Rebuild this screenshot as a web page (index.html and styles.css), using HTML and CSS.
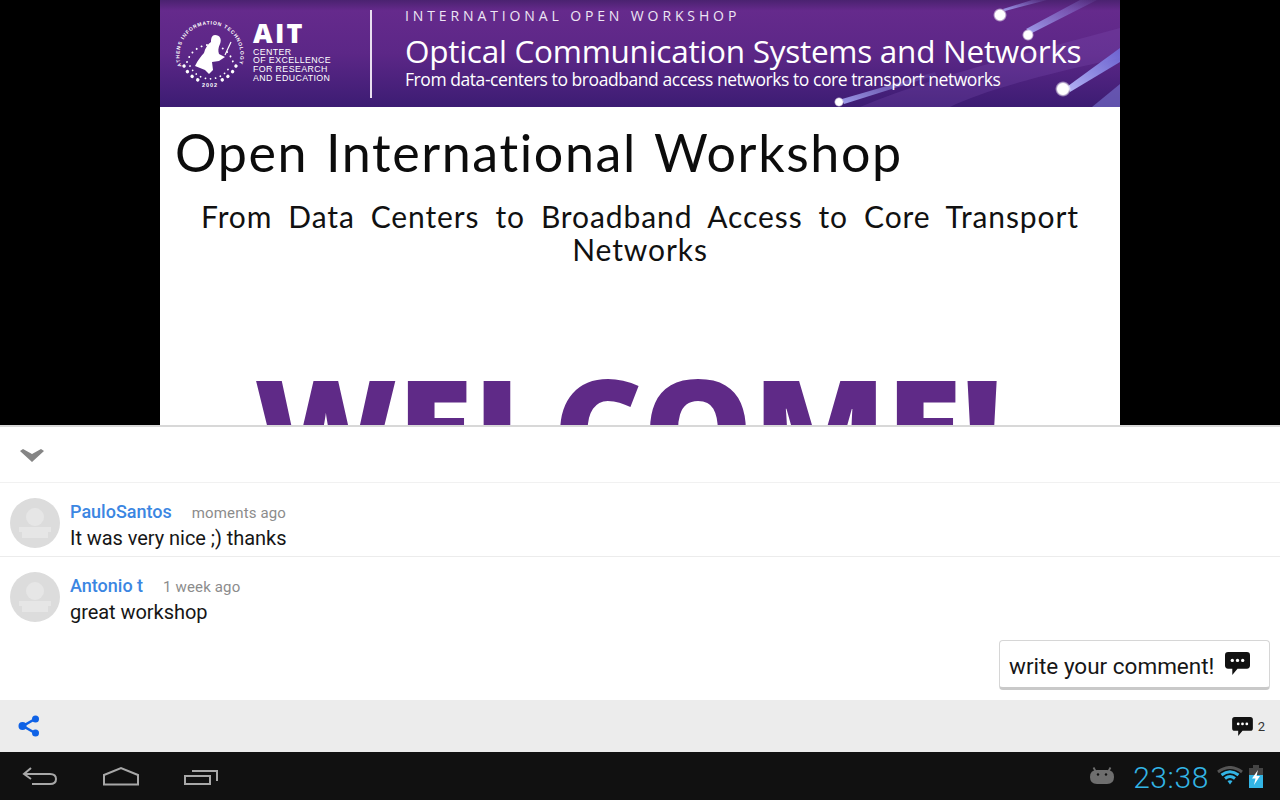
FILE: index.html
```html
<!DOCTYPE html>
<html lang="en">
<head>
<meta charset="utf-8">
<title>Workshop</title>
<link rel="stylesheet" href="styles.css">
</head>
<body>
<div class="app">
  <section class="player">
    <div class="slide">
      <header class="banner">
        <svg class="fibers" viewBox="0 0 960 107" width="960" height="107" aria-hidden="true">
          <defs>
            <linearGradient id="f1" x1="0" y1="1" x2="1" y2="0"><stop offset="0" stop-color="#a3a3f0" stop-opacity=".95"/><stop offset="1" stop-color="#8f8fe8" stop-opacity=".08"/></linearGradient>
            <linearGradient id="f3" x1="0" y1="1" x2="1" y2="0"><stop offset="0" stop-color="#b5b5f5"/><stop offset="1" stop-color="#6f6fe0" stop-opacity=".8"/></linearGradient>
            <radialGradient id="dot"><stop offset=".68" stop-color="#fff"/><stop offset="1" stop-color="#fff" stop-opacity="0"/></radialGradient>
          </defs>
          <path d="M700 107 C770 78 860 55 960 28 L960 58 C880 75 820 92 790 107Z" fill="#8a5cc0" opacity=".22"/>
          <path d="M682 99 L775 72 L776 75 L684 104Z" fill="url(#f1)"/>
          <path d="M845 11 L887 0 L872 0 L843 9Z" fill="url(#f1)"/>
          <path d="M872 33 L937 0 L920 0 L866 29Z" fill="url(#f1)"/>
          <path d="M908 86 L960 48 L960 62 L910 92Z" fill="url(#f3)"/>
          <path d="M932 107 L960 84 L960 107Z" fill="#7f7fdc" opacity=".55"/>
          <circle cx="840" cy="15" r="7" fill="url(#dot)"/>
          <circle cx="868" cy="35" r="6" fill="url(#dot)"/>
          <circle cx="903" cy="89" r="8" fill="url(#dot)"/>
          <circle cx="679" cy="102" r="5" fill="url(#dot)"/>
        </svg>
        <div class="logo">
          <svg class="seal" viewBox="0 0 70 70" width="70" height="70" aria-hidden="true">
            <defs><path id="ring" d="M7 47 A30.500 30.500 0 1 1 63 47"/></defs>
            <text class="seal-text"><textPath href="#ring" startOffset="1">ATHENS INFORMATION TECHNOLOGY</textPath></text>
            <path d="M12 42 A24 24 0 0 1 58 42" fill="none" stroke="#fff" stroke-width="1.900" stroke-dasharray=".1 5.400" stroke-linecap="round"/>
            <path d="M9 46 A28 28 0 0 0 23 60" fill="none" stroke="#fff" stroke-width="3.400" stroke-dasharray=".1 6.500" stroke-linecap="round"/>
            <path d="M61 46 A28 28 0 0 1 47 60" fill="none" stroke="#fff" stroke-width="3.400" stroke-dasharray=".1 6.500" stroke-linecap="round"/>
            <path d="M15 46 A22 22 0 0 0 55 46" fill="none" stroke="#fff" stroke-width="1.700" stroke-dasharray=".1 5" stroke-linecap="round"/>
            <path d="M40 15 C45 15 47 19 45 24 C43 28 43 31 44 34 L50 37 L44 41 L37 42 L38 50 L34 54 L30 50 L20 46 C23 40 26 36 29 33 C30 28 33 24 36 22 C36 18 37 15 40 15Z" fill="#fff"/>
            <path d="M50 35 L56 22" stroke="#fff" stroke-width="1.200"/>
            <text class="seal-year" x="35" y="66.500" text-anchor="middle">2002</text>
          </svg>
          <div class="logo-words">
            <div class="logo-ait">AIT</div>
            <div class="logo-sub">CENTER<br>OF EXCELLENCE<br>FOR RESEARCH<br>AND EDUCATION</div>
          </div>
        </div>
        <div class="banner-rule"></div>
        <div class="banner-text">
          <div class="banner-kicker">INTERNATIONAL OPEN WORKSHOP</div>
          <div class="banner-title">Optical Communication Systems and Networks</div>
          <div class="banner-sub">From data-centers to broadband access networks to core transport networks</div>
        </div>
      </header>
      <h1 class="slide-title">Open International Workshop</h1>
      <p class="slide-sub">From Data Centers to Broadband Access to Core Transport<br>Networks</p>
      <div class="slide-welcome">WELCOME!</div>
    </div>
  </section>

  <section class="panel">
    <div class="collapse-row">
      <svg class="chevron" viewBox="0 0 24 13" width="24" height="13" aria-hidden="true"><path d="M0 2 L3 0 L12 5 L21 0 L24 2 L12 13Z" fill="#858585"/></svg>
    </div>
    <article class="comment">
      <svg class="avatar" viewBox="0 0 50 50" width="50" height="50" aria-hidden="true"><circle cx="25" cy="25" r="25" fill="#dcdcdc"/><circle cx="25" cy="19" r="9" fill="#e6e6e6"/><path d="M9 29 H41 V34 H38 V40 H12 V34 H9Z" fill="#e6e6e6"/></svg>
      <div class="comment-body">
        <div class="comment-head"><span class="author">PauloSantos</span><span class="when">moments ago</span></div>
        <div class="comment-text">It was very nice ;) thanks</div>
      </div>
    </article>
    <article class="comment">
      <svg class="avatar" viewBox="0 0 50 50" width="50" height="50" aria-hidden="true"><circle cx="25" cy="25" r="25" fill="#dcdcdc"/><circle cx="25" cy="19" r="9" fill="#e6e6e6"/><path d="M9 29 H41 V34 H38 V40 H12 V34 H9Z" fill="#e6e6e6"/></svg>
      <div class="comment-body">
        <div class="comment-head"><span class="author">Antonio t</span><span class="when">1 week ago</span></div>
        <div class="comment-text">great workshop</div>
      </div>
    </article>
    <div class="compose-row">
      <button class="compose">write your comment!
        <svg viewBox="0 0 24 22" width="25" height="23" aria-hidden="true"><path d="M3 0 H21 Q24 0 24 3 V13 Q24 16 21 16 H12 L7 22 V16 H3 Q0 16 0 13 V3 Q0 0 3 0Z" fill="#111"/><circle cx="7" cy="8" r="1.600" fill="#fff"/><circle cx="12" cy="8" r="1.600" fill="#fff"/><circle cx="17" cy="8" r="1.600" fill="#fff"/></svg>
      </button>
    </div>
  </section>

  <div class="action-bar">
    <svg viewBox="0 0 22 22" width="22" height="22" aria-hidden="true"><path d="M17 4 L5 11 L17 18" fill="none" stroke="#0f62e6" stroke-width="2.600"/><circle cx="17.500" cy="4" r="3.500" fill="#0f62e6"/><circle cx="4.500" cy="11" r="4" fill="#0f62e6"/><circle cx="17.500" cy="18" r="3.500" fill="#0f62e6"/></svg>
    <div class="count">
      <svg viewBox="0 0 24 22" width="21" height="19" aria-hidden="true"><path d="M3 0 H21 Q24 0 24 3 V13 Q24 16 21 16 H12 L7 22 V16 H3 Q0 16 0 13 V3 Q0 0 3 0Z" fill="#111"/><circle cx="7" cy="8" r="1.600" fill="#fff"/><circle cx="12" cy="8" r="1.600" fill="#fff"/><circle cx="17" cy="8" r="1.600" fill="#fff"/></svg>
      <span>2</span>
    </div>
  </div>

  <nav class="sysbar">
    <div class="nav-keys">
      <svg viewBox="0 0 36 20" width="36" height="20" aria-hidden="true"><path d="M9 2 L2 8 L9 13 M2 8 H28 Q34 8 34 13 Q34 18 28 18 H10" fill="none" stroke="#a8a8a8" stroke-width="2"/></svg>
      <svg viewBox="0 0 38 20" width="38" height="20" aria-hidden="true"><path d="M2 9 L19 2 L36 9 V18.500 H2Z" fill="none" stroke="#a8a8a8" stroke-width="2"/></svg>
      <svg viewBox="0 0 36 20" width="36" height="20" aria-hidden="true"><path d="M2 10 H27 V18 H2Z M9 5 H34 V15" fill="none" stroke="#a8a8a8" stroke-width="2"/></svg>
    </div>
    <div class="status">
      <svg class="droid" viewBox="0 0 24 18" width="24" height="18" aria-hidden="true"><path d="M6 5 L3.500 0.500 M18 5 L20.500 0.500" stroke="#6e6e6e" stroke-width="1.800"/><path d="M7 3 H17 Q24 3 24 10 Q24 17 17 17 H7 Q0 17 0 10 Q0 3 7 3Z" fill="#6e6e6e"/><circle cx="8" cy="7.500" r="1.200" fill="#111"/><circle cx="16" cy="7.500" r="1.200" fill="#111"/></svg>
      <span class="clock">23:38</span>
      <svg viewBox="0 0 26 20" width="26" height="20" aria-hidden="true"><path d="M1 6 Q13 -3 25 6" fill="none" stroke="#555" stroke-width="3"/><path d="M4.500 9 Q13 2.500 21.500 9" fill="none" stroke="#33b5e5" stroke-width="3"/><path d="M8 12.500 Q13 8.500 18 12.500" fill="none" stroke="#33b5e5" stroke-width="3"/><path d="M10.500 15 L13 18.500 L15.500 15 Q13 13.500 10.500 15Z" fill="#33b5e5"/></svg>
      <svg viewBox="0 0 14 23" width="14" height="23" aria-hidden="true"><path d="M4 0 H10 V3 H14 V23 H0 V3 H4Z" fill="#444"/><path d="M0 10 H14 V23 H0Z" fill="#33b5e5"/><path d="M9 5 L3 13.500 H6.500 L5 20 L11 11 H7.500Z" fill="#fff"/></svg>
    </div>
  </nav>
</div>
</body>
</html>
```
FILE: styles.css
```css
* { box-sizing: border-box; }
html, body { margin: 0; padding: 0; }
body { width: 1280px; height: 800px; overflow: hidden; background: #fff; font-family: Roboto, sans-serif; }
.app { display: flex; flex-direction: column; width: 1280px; height: 800px; }

.player { height: 425px; background: #000; display: flex; justify-content: center; flex: none; }
.slide { width: 960px; height: 425px; background: #fff; overflow: hidden; color: #111; }

.banner { position: relative; height: 107px; display: flex; align-items: center; overflow: hidden; color: #fff;
  background: linear-gradient(180deg, #4a2270 0, #652a8c 10%, #5c2787 50%, #3c1c73 100%); }
.fibers { position: absolute; left: 0; top: 0; }
.logo { position: relative; display: flex; align-items: flex-start; margin-left: 15px; width: 178px; height: 70px; margin-top: 2px; }
.seal { flex: none; }
.seal-text { font: bold 5px "Liberation Sans", sans-serif; fill: #fff; letter-spacing: .8px; }
.seal-year { font: bold 5.500px "Liberation Sans", sans-serif; fill: #fff; letter-spacing: 1px; }
.logo-words { margin-left: 8px; margin-top: 1px; }
.logo-ait { font: 800 27px/30px "Open Sans", sans-serif; letter-spacing: 2.300px; margin-top: -3px; }
.logo-sub { font: 8.800px/8.700px "Liberation Sans", sans-serif; letter-spacing: .4px; }
.banner-rule { position: relative; width: 2px; height: 88px; background: #e9dff0; margin-left: 17px; }
.banner-text { position: relative; margin-left: 33px; margin-top: -13px; }
.banner-kicker { font: 14px/18px "Open Sans", sans-serif; letter-spacing: 3.880px; color: #eee6f4; }
.banner-title { font: 31.500px/38px "Open Sans", sans-serif; letter-spacing: -.27px; margin-top: 7px; white-space: nowrap; }
.banner-sub { font: 17.500px/18px "Open Sans", sans-serif; letter-spacing: -.44px; white-space: nowrap; }

.slide-title { margin: 15px 0 0 15px; font: 400 52px/60px Lato, sans-serif; letter-spacing: 1.600px; word-spacing: 3px; white-space: nowrap; color: #0c0c0c; }
.slide-sub { margin: 18px 0 0; text-align: center; font: 400 30px/33px Lato, sans-serif; letter-spacing: .9px; word-spacing: 7.400px; color: #111; }
.slide-welcome { margin-top: 85px; padding-right: 24px; text-align: center; font: 800 138px/150px "Open Sans", sans-serif; color: #5f2a87; white-space: nowrap; }

.panel { flex: 1; background: #fff; border-top: 2px solid #d8d8d8; display: flex; flex-direction: column; }
.collapse-row { height: 56px; flex: none; display: flex; align-items: center; padding-left: 20px; border-bottom: 1px solid #f1f1f1; }
.chevron { margin-top: 2px; }
.comment { height: 74px; flex: none; display: flex; align-items: flex-start; gap: 10px; padding: 15px 0 0 10px; border-bottom: 1px solid #ececec; }
.comment:nth-of-type(2) { border-bottom: 0; }
.comment-body { display: flex; flex-direction: column; }
.comment-head { display: flex; align-items: baseline; gap: 20px; height: 27px; }
.author { font: 500 18px/27px Roboto, sans-serif; color: #3b86e2; }
.when { font: 15px/27px Roboto, sans-serif; letter-spacing: .15px; color: #8c8c8c; }
.comment-text { font: 20px/26px Roboto, sans-serif; letter-spacing: -.05px; color: #161616; }
.compose-row { flex: 1; display: flex; justify-content: flex-end; align-items: flex-start; padding: 9px 10px 0 0; }
.compose { display: flex; align-items: center; gap: 11px; width: 271px; height: 50px; padding: 5px 0 0 9px; border: 1px solid #d6d6d6; border-bottom: 3px solid #c9c9c9; border-radius: 4px; background: #fff; font: 22.500px/1 Roboto, sans-serif; color: #161616; white-space: nowrap; }
.compose svg { margin-top: -6px; }

.action-bar { height: 52px; flex: none; background: #ececec; display: flex; align-items: center; justify-content: space-between; padding: 0 15px 0 18px; }
.count { display: flex; align-items: center; gap: 5px; font: 13px Roboto, sans-serif; color: #333; }

.sysbar { height: 48px; flex: none; background: #111; display: flex; align-items: center; justify-content: space-between; padding: 0 17px 0 22px; }
.nav-keys { display: flex; gap: 43.500px; align-items: center; }
.status { display: flex; align-items: center; gap: 6px; }
.droid { margin-right: 13px; }
.clock { font: 300 30px/1 Roboto, sans-serif; letter-spacing: .6px; color: #33b5e5; margin-right: 2px; padding-top: 3px; }
```
